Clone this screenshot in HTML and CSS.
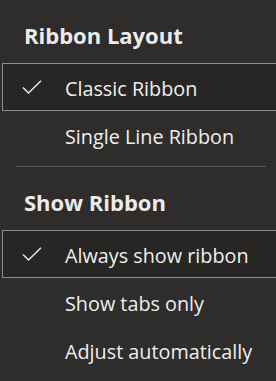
FILE: index.html
```html
<!DOCTYPE html>
<html>
<head>
<meta charset="utf-8">
<link rel="stylesheet" href="styles.css">
</head>
<body>
<div class="frame">
<div class="menu">
  <div class="header">Ribbon Layout</div>
  <div class="item selected">
    <span class="check"><svg width="20" height="14" viewBox="0 0 20 14"><path d="M1 7.5 L6.5 13 L19 0.8" fill="none" stroke="#e6e6e6" stroke-width="1.5"/></svg></span>
    <span class="label">Classic Ribbon</span>
  </div>
  <div class="item">
    <span class="check"></span>
    <span class="label">Single Line Ribbon</span>
  </div>
  <div class="sep"></div>
  <div class="header">Show Ribbon</div>
  <div class="item selected">
    <span class="check"><svg width="20" height="14" viewBox="0 0 20 14"><path d="M1 7.5 L6.5 13 L19 0.8" fill="none" stroke="#e6e6e6" stroke-width="1.5"/></svg></span>
    <span class="label">Always show ribbon</span>
  </div>
  <div class="item">
    <span class="check"></span>
    <span class="label">Show tabs only</span>
  </div>
  <div class="item">
    <span class="check"></span>
    <span class="label">Adjust automatically</span>
  </div>
</div>
</div>
</body>
</html>
```
FILE: styles.css
```css
html, body {
  margin: 0;
  padding: 0;
  background: #2e2d2b;
}
.frame {
  width: 276px;
  height: 381px;
  overflow: hidden;
}
.menu {
  width: 300px;
  font-family: "Open Sans", "Noto Sans", sans-serif;
  color: #efefef;
}
.header {
  box-sizing: border-box;
  height: 63px;
  padding-left: 24px;
  padding-top: 22px;
  font-size: 22px;
  line-height: 26px;
  font-weight: 700;
  color: #ebebeb;
}
.item {
  box-sizing: border-box;
  height: 48px;
  margin-left: 2px;
  border: 1px solid transparent;
  display: flex;
  align-items: center;
  padding-top: 2px;
  font-size: 19.8px;
  white-space: nowrap;
}
.item.selected {
  background: #272624;
  border-color: #8d8d8d;
}
.check {
  width: 20px;
  height: 14px;
  margin-left: 19px;
  margin-right: 23px;
  display: flex;
  margin-top: -2px;
  flex: none;
}
.sep {
  height: 1px;
  background: #5b5957;
  margin: 7px 0 0 16px;
  width: 250px;
}
```
